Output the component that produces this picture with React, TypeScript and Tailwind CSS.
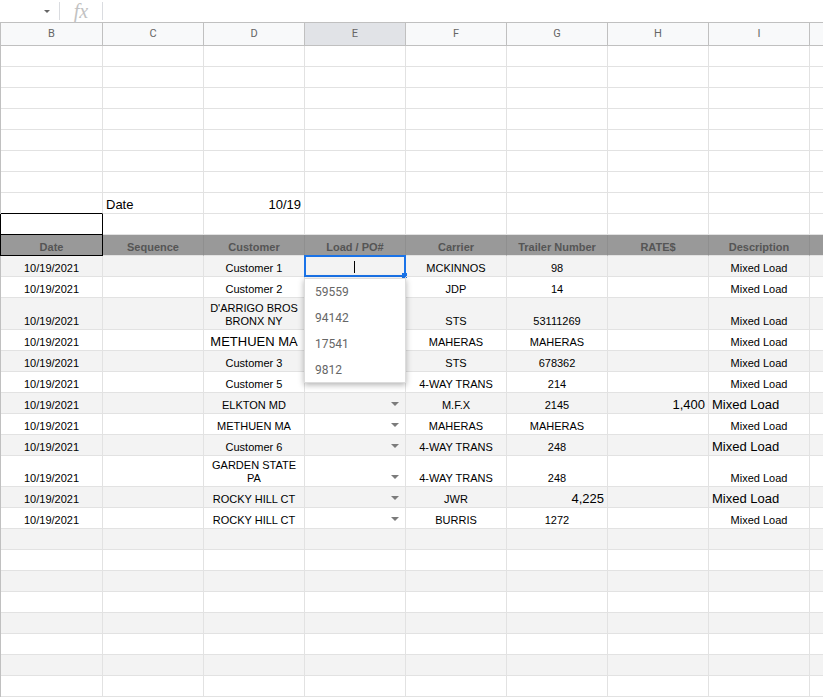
import { twMerge } from "tailwind-merge";

type Cell = {
  t?: string | string[];
  a?: "l" | "c" | "r";
  big?: boolean;
  arrow?: boolean;
  sel?: boolean;
};

const DATE = "10/19/2021";
const ML = "Mixed Load";
const AR: Cell = { arrow: true };

const letters = ["B", "C", "D", "E", "F", "G", "H", "I", ""];

const data: { h: string; cells: (Cell | string)[] }[] = [
  { h: "h-[21px]", cells: [DATE, "", "Customer 1", { sel: true }, "MCKINNOS", "98", "", ML] },
  { h: "h-[21px]", cells: [DATE, "", "Customer 2", "", "JDP", "14", "", ML] },
  { h: "h-[32px]", cells: [DATE, "", { t: ["D'ARRIGO BROS", "BRONX NY"] }, "", "STS", "53111269", "", ML] },
  { h: "h-[21px]", cells: [DATE, "", { t: "METHUEN MA", big: true }, "", "MAHERAS", "MAHERAS", "", ML] },
  { h: "h-[21px]", cells: [DATE, "", "Customer 3", "", "STS", "678362", "", ML] },
  { h: "h-[21px]", cells: [DATE, "", "Customer 5", "", "4-WAY TRANS", "214", "", ML] },
  {
    h: "h-[21px]",
    cells: [DATE, "", "ELKTON MD", AR, "M.F.X", "2145", { t: "1,400", big: true, a: "r" }, { t: ML, big: true, a: "l" }],
  },
  { h: "h-[21px]", cells: [DATE, "", "METHUEN MA", AR, "MAHERAS", "MAHERAS", "", ML] },
  { h: "h-[21px]", cells: [DATE, "", "Customer 6", AR, "4-WAY TRANS", "248", "", { t: ML, big: true, a: "l" }] },
  { h: "h-[31px]", cells: [DATE, "", { t: ["GARDEN STATE", "PA"] }, AR, "4-WAY TRANS", "248", "", ML] },
  {
    h: "h-[21px]",
    cells: [DATE, "", "ROCKY HILL CT", AR, "JWR", { t: "4,225", big: true, a: "r" }, "", { t: ML, big: true, a: "l" }],
  },
  { h: "h-[21px]", cells: [DATE, "", "ROCKY HILL CT", AR, "BURRIS", "1272", "", ML] },
];

function Row({
  h = "h-[21px]",
  bg = "bg-white",
  cells = [],
  header = false,
  boxB = "",
  edge = "bg-[#c0c0c0]",
}: {
  h?: string;
  bg?: string;
  cells?: (Cell | string)[];
  header?: boolean;
  boxB?: string;
  edge?: string;
}) {
  return (
    <div className={twMerge("flex shrink-0", h, bg)}>
      <div className={twMerge("w-px shrink-0", edge)} />
      {letters.map((_, i) => {
        const raw = cells[i] ?? {};
        const c: Cell = typeof raw === "string" ? { t: raw } : raw;
        const a = c.a ?? "c";
        const lines = c.t === undefined ? [] : Array.isArray(c.t) ? c.t : [c.t];
        return (
          <div
            key={i}
            className={twMerge(
              "relative flex shrink-0 items-end border-b border-r border-[#e2e2e2] px-[3px] pb-px",
              i === 0 ? "w-[102px]" : "w-[101px]",
              i === 8 && "flex-1 border-r-0",
              a === "c" && "justify-center text-center",
              a === "l" && "justify-start",
              a === "r" && "justify-end",
              header && "border-r-[#8f8f8f] font-bold text-[#555555]",
              i === 0 && boxB,
            )}
          >
            <div className={c.big ? "text-[13px] leading-[15px]" : "text-[11px] leading-[13px]"}>
              {lines.map((l, k) => (
                <div key={k} className="whitespace-nowrap">
                  {l}
                </div>
              ))}
            </div>
            {c.arrow && (
              <div className="absolute bottom-[7px] right-[6px] h-0 w-0 border-l-[4px] border-r-[4px] border-t-[4px] border-l-transparent border-r-transparent border-t-[#7b7b7b]" />
            )}
            {c.sel && (
              <div className="absolute -left-px -top-px h-[22px] w-[102px] border-2 border-[#1a73e8]">
                <div className="absolute left-[48px] top-[4px] h-[12px] w-px bg-black" />
                <div className="absolute -bottom-[3px] -right-[3px] h-[5px] w-[5px] bg-[#1a73e8]" />
              </div>
            )}
          </div>
        );
      })}
    </div>
  );
}

export default function App() {
  const empty = Array.from({ length: 8 });
  return (
    <div className="relative h-[697px] w-[823px] overflow-hidden bg-white font-['Liberation_Sans',Arial,sans-serif] text-black">
      {/* Formula bar */}
      <div className="flex h-[22px] items-center">
        <div className="flex w-[59px] justify-end pr-[9px]">
          <div className="h-0 w-0 border-l-[3px] border-r-[3px] border-t-[3px] border-l-transparent border-r-transparent border-t-[#666]" />
        </div>
        <div className="h-[18px] w-px bg-[#dadce0]" />
        <div className="flex w-[42px] justify-center font-['Liberation_Serif',serif] text-[20px] leading-[20px] italic text-[#c2c2c2]">
          fx
        </div>
        <div className="h-[18px] w-px bg-[#dadce0]" />
      </div>

      {/* Column letters */}
      <div className="flex h-[24px] border-b border-t border-[#c0c0c0] bg-[#f8f9fa] font-['Roboto',sans-serif] text-[11px] text-[#666]">
        <div className="w-px shrink-0 bg-[#c0c0c0]" />
        {letters.map((l, i) => (
          <div
            key={i}
            className={twMerge(
              "flex shrink-0 items-center justify-center border-r border-[#c0c0c0]",
              i === 0 ? "w-[102px]" : "w-[101px]",
              i === 3 && "bg-[#e1e3e7]",
              i === 8 && "flex-1 border-r-0",
            )}
          >
            {l}
          </div>
        ))}
      </div>

      {/* Grid */}
      <div className="relative flex flex-col">
        {Array.from({ length: 7 }).map((_, i) => (
          <Row key={i} />
        ))}
        <Row
          cells={["", { t: "Date", big: true, a: "l" }, { t: "10/19", big: true, a: "r" }]}
          boxB="border-b-black"
        />
        <Row boxB="border-b-black border-r-black" edge="bg-black" />
        <Row
          header
          bg="bg-[#999999]"
          edge="bg-black"
          boxB="border-b-black border-r-black"
          cells={["Date", "Sequence", "Customer", "Load / PO#", "Carrier", "Trailer Number", "RATE$", "Description"]}
        />
        {data.map((r, i) => (
          <Row key={i} h={r.h} bg={i % 2 === 0 ? "bg-[#f3f3f3]" : "bg-white"} cells={r.cells} />
        ))}
        {empty.map((_, i) => (
          <Row key={i} bg={i % 2 === 0 ? "bg-[#f3f3f3]" : "bg-white"} />
        ))}

        {/* Validation dropdown */}
        <div className="absolute left-[304px] top-[232px] h-[105px] w-[102px] border border-[#dcdcdc] bg-white font-['Roboto',sans-serif] text-[12px] text-[#666] shadow-[0_2px_6px_rgba(0,0,0,0.3)]">
          {["59559", "94142", "17541", "9812"].map((v) => (
            <div key={v} className="flex h-[26px] items-center pl-[10px]">
              {v}
            </div>
          ))}
        </div>
      </div>
    </div>
  );
}
